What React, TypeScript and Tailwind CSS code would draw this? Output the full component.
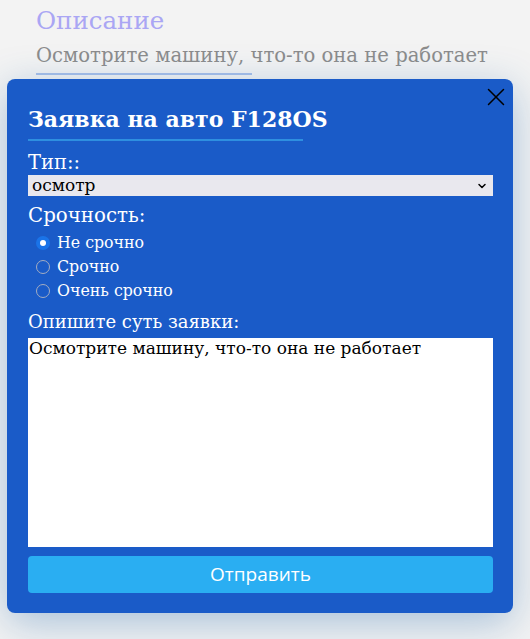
import { X, ChevronDown } from 'lucide-react';

const options = [
  { label: "Не срочно", checked: true },
  { label: "Срочно", checked: false },
  { label: "Очень срочно", checked: false },
];

const serif = { fontFamily: '"DejaVu Serif", serif' };

const App = () => {
  return (
    <div className="min-h-[639px] w-[530px] bg-[#f3f3f3] overflow-hidden" style={serif}>
      <div className="pl-9 pt-[6px]">
        <div className="text-[24.5px] leading-[30px] text-[#aaa6f4]">Описание</div>
        <div className="mt-[7px] text-[19.6px] leading-[26px] text-[#8c8c8c] whitespace-nowrap">
          Осмотрите машину, что-то она не работает
        </div>
        <div className="mt-[4px] h-[2px] w-[216px] bg-[#a8c0e9]" />
      </div>

      <div className="relative mx-[7px] mt-[4px] w-[506px] rounded-lg bg-[#1a5bc8] px-[21px] pt-[25px] pb-[20px] shadow-[0_10px_40px_rgba(30,100,170,0.35)]">
        <button className="absolute right-[2px] top-[3px] text-black">
          <X className="h-[30px] w-[30px]" strokeWidth={1.2} />
        </button>

        <h2 className="text-[22px] leading-[30px] font-bold text-white">Заявка на авто F128OS</h2>
        <div className="mt-[5px] h-[2px] w-[275px] bg-[#2e8fe0]" />

        <div className="mt-[11px] text-[19.5px] leading-[22px] text-white">Тип::</div>
        <div className="mt-[1px] flex h-[21px] w-[465px] items-center justify-between bg-[#e9e8ee] pl-[4px] pr-[5px] text-[17px] text-black">
          <span>осмотр</span>
          <ChevronDown className="h-[12px] w-[12px]" strokeWidth={3} />
        </div>

        <div className="mt-[9px] text-[19.8px] leading-[22px] text-white">Срочность:</div>
        <div className="mt-[4px] flex flex-col pl-[8px]">
          {options.map((o, i) => (
            <label key={i} className="flex h-[24px] items-center gap-[7px] text-[15.8px] text-white">
              {o.checked ? (
                <span className="flex h-[14px] w-[14px] items-center justify-center rounded-full bg-[#1a73e8]">
                  <span className="h-[6px] w-[6px] rounded-full bg-white" />
                </span>
              ) : (
                <span className="h-[14px] w-[14px] rounded-full border border-[#a4adc2]" />
              )}
              <span>{o.label}</span>
            </label>
          ))}
        </div>

        <div className="mt-[8px] text-[18px] leading-[22px] text-white">Опишите суть заявки:</div>
        <div className="mt-[5px] h-[209px] w-[465px] bg-white px-[1px] text-[17px] leading-[21px] text-black">
          Осмотрите машину, что-то она не работает
        </div>

        <button
          className="mt-[9px] h-[37px] w-[465px] rounded-[4px] bg-[#2aaef2] text-[19px] text-white"
          style={{ fontFamily: '"Open Sans", sans-serif' }}
        >
          Отправить
        </button>
      </div>
    </div>
  );
};

export default App;
